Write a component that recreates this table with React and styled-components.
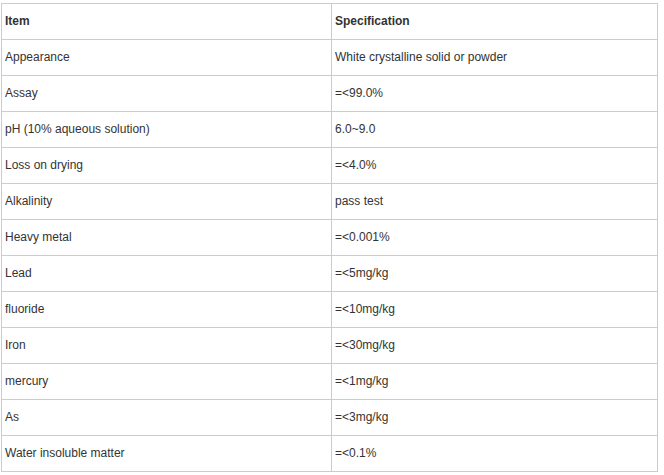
import React from "react";
import styled, { createGlobalStyle } from "styled-components";

const rows = [
  ["Appearance", "White crystalline solid or powder"],
  ["Assay", "=<99.0%"],
  ["pH (10% aqueous solution)", "6.0~9.0"],
  ["Loss on drying", "=<4.0%"],
  ["Alkalinity", "pass test"],
  ["Heavy metal", "=<0.001%"],
  ["Lead", "=<5mg/kg"],
  ["fluoride", "=<10mg/kg"],
  ["Iron", "=<30mg/kg"],
  ["mercury", "=<1mg/kg"],
  ["As", "=<3mg/kg"],
  ["Water insoluble matter", "=<0.1%"],
];

const App = () => {
  return (
    <Page>
      <GlobalStyle />
      <Table>
        <colgroup>
          <col style={{ width: 330 }} />
          <col style={{ width: 326 }} />
        </colgroup>
        <thead>
          <tr>
            <Head>Item</Head>
            <Head>Specification</Head>
          </tr>
        </thead>
        <tbody>
          {rows.map(([item, spec]) => (
            <tr key={item}>
              <Cell>{item}</Cell>
              <Cell>{spec}</Cell>
            </tr>
          ))}
        </tbody>
      </Table>
    </Page>
  );
};

export default App;

const GlobalStyle = createGlobalStyle`
  body {
    margin: 0;
    background: #fff;
    font-family: "Liberation Sans", Arial, sans-serif;
  }
`;

const Page = styled.div`
  padding: 3px 0 0 1px;
`;

const Table = styled.table`
  border-collapse: collapse;
  table-layout: fixed;
  width: 657px;
  color: #333;
  font-size: 12px;
`;

const Cell = styled.td`
  height: 36px;
  padding: 0 0 1px 3px;
  border: 1px solid #ccc;
  text-align: left;
  vertical-align: middle;
  box-sizing: border-box;
`;

const Head = styled(Cell).attrs({ as: "th" })`
  font-weight: bold;
`;
